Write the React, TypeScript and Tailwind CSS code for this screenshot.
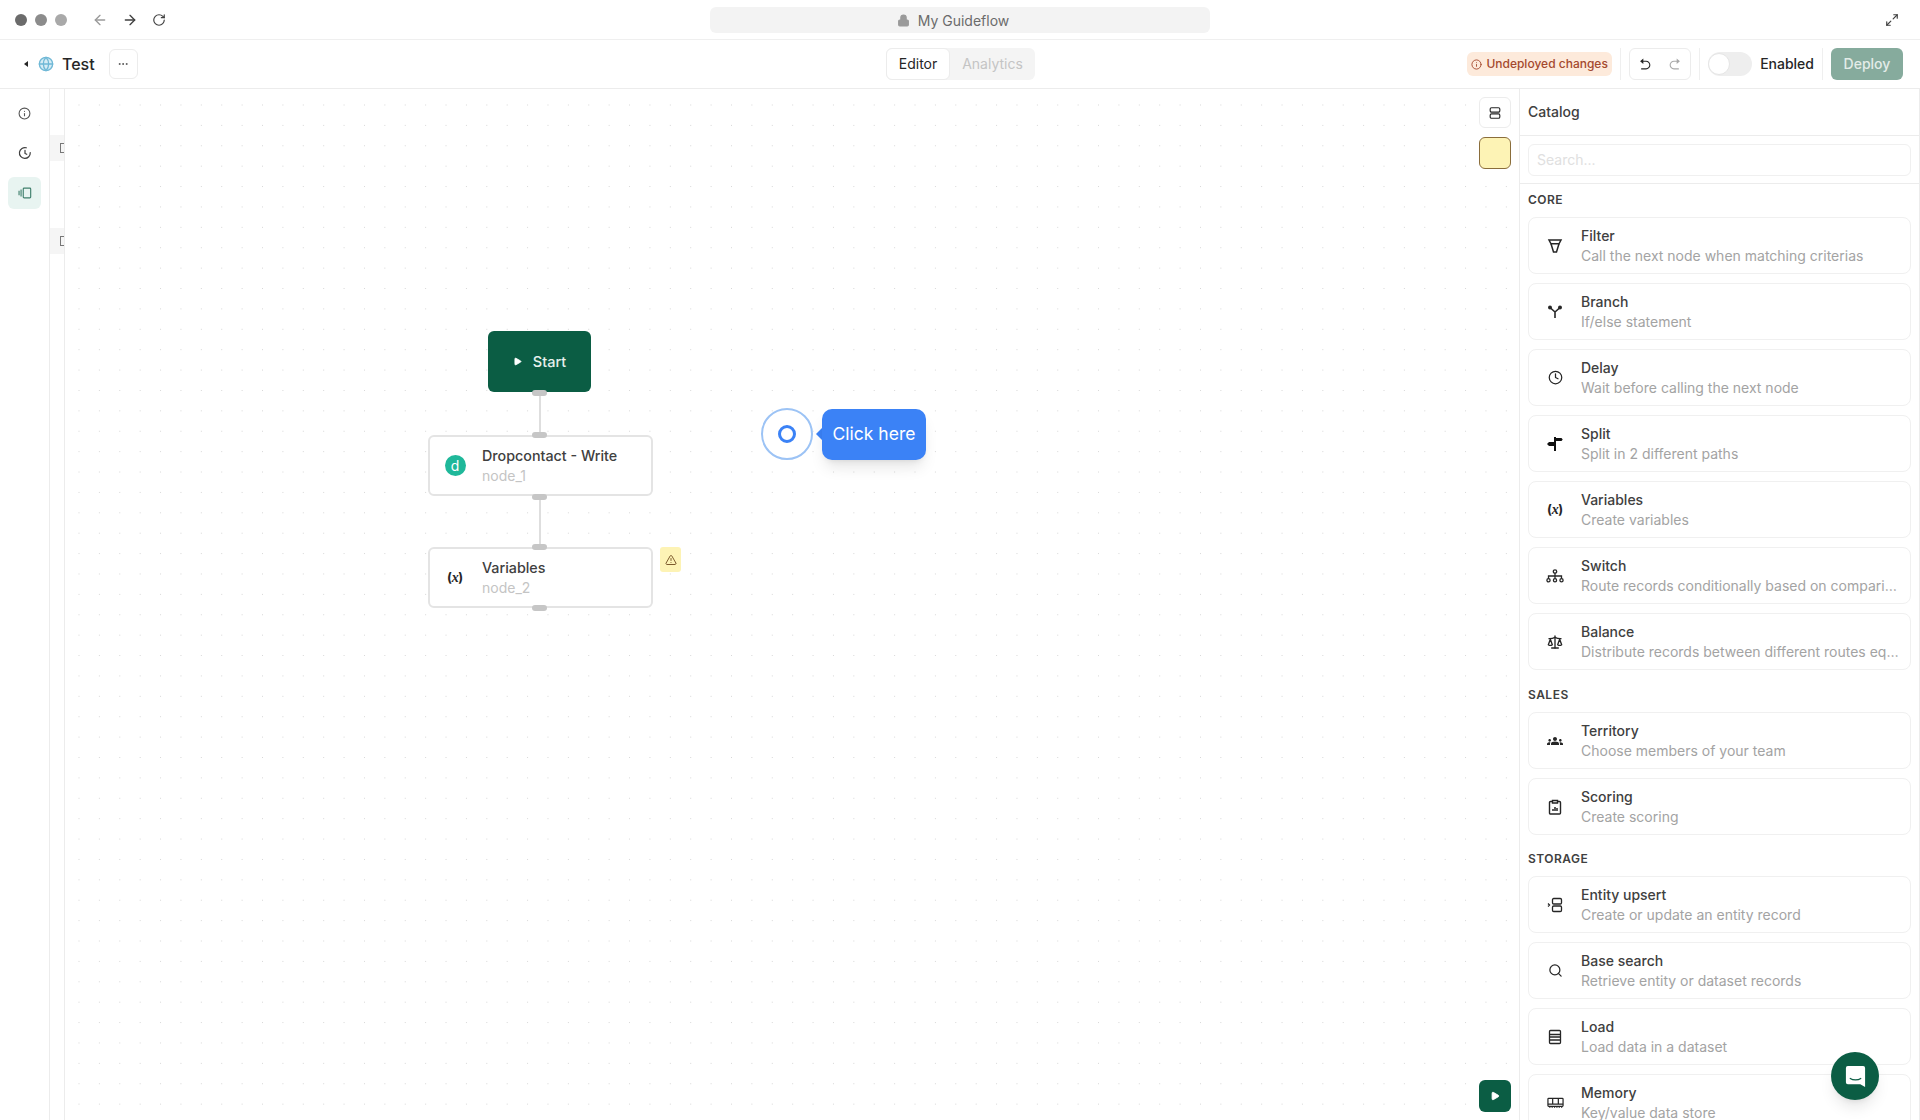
import { ReactNode } from "react";
import { ArrowLeft, ArrowRight, RotateCw, Globe, Maximize2, Info, Clock, Scale, Search, Play, TriangleAlert, Ellipsis, Lock } from "lucide-react";
import { RiArrowGoBackFill, RiArrowGoForwardFill } from "react-icons/ri";
import { MdGroups } from "react-icons/md";

const VariableIcon = () => (
  <span className="text-[13px] font-bold text-[#262626] tracking-tight">
    (<span className="italic font-['Liberation_Serif',serif] text-[14px]">x</span>)
  </span>
);

const svg = "w-4 h-4";

const FilterIcon = () => (
  <svg viewBox="0 0 16 16" className={svg} fill="none" stroke="#262626" strokeWidth="1.5">
    <path d="M2 2h12l-2 3.800H4z" />
    <path d="M4 5.800 6.500 14h3L12 5.800" />
  </svg>
);
const BranchIcon = () => (
  <svg viewBox="0 0 16 16" className={svg} fill="none" stroke="#262626" strokeWidth="1.600">
    <path d="M3.500 4 8 8l4.500-4M8 8v6" />
    <circle cx="3" cy="3.500" r="2" fill="#262626" stroke="none" />
    <circle cx="13" cy="3.500" r="2" fill="#262626" stroke="none" />
  </svg>
);
const SplitIcon = () => (
  <svg viewBox="0 0 16 16" className={svg} fill="#111">
    <path d="M7 1h2v14H7z" />
    <path d="M8.500 2h6l1.200 1.500-1.200 1.500h-6z" />
    <path d="M8 6H2L0 8l2 2h6z" />
  </svg>
);
const SwitchIcon = () => (
  <svg viewBox="0 0 18 16" className="w-[18px] h-4" fill="none" stroke="#262626" strokeWidth="1.3">
    <circle cx="9" cy="3.500" r="1.700" />
    <path d="M9 5.200V8M2.500 10.500V8h13v2.500M9 8v2.500" />
    <circle cx="2.500" cy="12.300" r="1.600" />
    <circle cx="9" cy="12.300" r="1.600" />
    <circle cx="15.500" cy="12.300" r="1.600" />
  </svg>
);
const ScoringIcon = () => (
  <svg viewBox="0 0 16 16" className={svg} fill="none" stroke="#262626" strokeWidth="1.4">
    <rect x="2.500" y="2.500" width="11" height="12.500" rx="1" />
    <path d="M5.500 1.500h5v2.500h-5z" fill="#fff" />
    <path d="M6 12V10M8 12V8M10 12V9" strokeWidth="1.500" />
  </svg>
);
const EntityIcon = () => (
  <svg viewBox="0 0 16 16" className={svg} fill="none" stroke="#262626" strokeWidth="1.300">
    <rect x="5.500" y="1.500" width="9" height="5.500" rx="1.200" />
    <rect x="5.500" y="9" width="9" height="5.500" rx="1.200" />
    <path d="m1 6.500 1.500 1.500L1 9.500" />
  </svg>
);
const LoadIcon = () => (
  <svg viewBox="0 0 16 16" className={svg} fill="none" stroke="#262626" strokeWidth="1.300">
    <rect x="2.500" y="1.500" width="11" height="13" rx="1" />
    <path d="M2.500 5.500h11M2.500 8h11M2.500 11h11" />
  </svg>
);
const MemoryIcon = () => (
  <svg viewBox="0 0 18 16" className="w-[17px] h-4" fill="none" stroke="#262626" strokeWidth="1.300">
    <rect x="1" y="3" width="16" height="8.500" rx="0.800" />
    <path d="M6 3v6M12 3v6M1 9.200h16" />
    <path d="M3 11.500v1.500M5.500 11.500v1.500M8 11.500v1.500M10.500 11.500v1.500M13 11.500v1.500M15.500 11.500v1.500" />
  </svg>
);
const PanelIcon = () => (
  <svg viewBox="0 0 16 16" className="w-[14px] h-[14px]" fill="none" stroke="#3f7f6c" strokeWidth="1.300">
    <rect x="6" y="2.500" width="8.500" height="11" rx="1" />
    <path d="M3.500 4v8M1.200 5.500v5" />
  </svg>
);
const StackIcon = () => (
  <svg viewBox="0 0 16 16" className="w-[14px] h-[14px]" fill="none" stroke="#262626" strokeWidth="1.300">
    <rect x="2.500" y="2" width="11" height="5" rx="1.500" />
    <rect x="2.500" y="9" width="11" height="5" rx="1.500" />
  </svg>
);
// clock with a small break in the ring, top right
const RecentIcon = () => (
  <svg viewBox="0 0 16 16" className="w-[14px] h-[14px]" fill="none" stroke="#404040" strokeWidth="1.400" strokeLinecap="round">
    <path d="M9.500 2A6.200 6.200 0 1 0 14 7.500" />
    <path d="M8 5v3.500l2 1" />
  </svg>
);

type Item = { title: string; desc: string; icon: ReactNode };

const sections: { name: string; className: string; items: Item[] }[] = [
  {
    name: "CORE",
    className: "",
    items: [
      { title: "Filter", desc: "Call the next node when matching criterias", icon: <FilterIcon /> },
      { title: "Branch", desc: "If/else statement", icon: <BranchIcon /> },
      { title: "Delay", desc: "Wait before calling the next node", icon: <Clock size={15} strokeWidth={2} color="#262626" /> },
      { title: "Split", desc: "Split in 2 different paths", icon: <SplitIcon /> },
      { title: "Variables", desc: "Create variables", icon: <VariableIcon /> },
      { title: "Switch", desc: "Route records conditionally based on comparisons", icon: <SwitchIcon /> },
      { title: "Balance", desc: "Distribute records between different routes equally", icon: <Scale size={16} strokeWidth={2} color="#262626" /> },
    ],
  },
  {
    name: "SALES",
    className: "mt-px",
    items: [
      { title: "Territory", desc: "Choose members of your team", icon: <MdGroups size={16} color="#262626" /> },
      { title: "Scoring", desc: "Create scoring", icon: <ScoringIcon /> },
    ],
  },
  {
    name: "STORAGE",
    className: "",
    items: [
      { title: "Entity upsert", desc: "Create or update an entity record", icon: <EntityIcon /> },
      { title: "Base search", desc: "Retrieve entity or dataset records", icon: <Search size={15} strokeWidth={2} color="#262626" /> },
      { title: "Load", desc: "Load data in a dataset", icon: <LoadIcon /> },
      { title: "Memory", desc: "Key/value data store", icon: <MemoryIcon /> },
    ],
  },
];

function CatalogCard({ item }: { item: Item }) {
  return (
    <div className="flex h-[57px] shrink-0 items-center rounded-lg border border-[#f0f0f0] bg-white">
      <div className="flex w-[52px] shrink-0 justify-center">{item.icon}</div>
      <div className="min-w-0 flex-1 pr-2">
        <div className="text-[14px] leading-5 font-medium text-[#404040]">{item.title}</div>
        <div className="truncate text-[14px] leading-5 text-[#a3a3a3]">{item.desc}</div>
      </div>
    </div>
  );
}

function Handle({ className }: { className: string }) {
  return <div className={"absolute h-[6px] w-[15px] rounded-full bg-[#c6c6c6] " + className} />;
}

function FlowNode({ top, title, sub, icon }: { top: string; title: string; sub: string; icon: ReactNode }) {
  return (
    <div className={"absolute left-[363px] flex h-[61px] w-[225px] items-center rounded-md border-2 border-[#e4e4e4] bg-white " + top}>
      <div className="flex w-[50px] shrink-0 justify-center">{icon}</div>
      <div className="pl-[2px]">
        <div className="text-[14.3px] leading-5 font-medium text-[#404040]">{title}</div>
        <div className="text-[14px] leading-5 text-[#c4c4c4]">{sub}</div>
      </div>
    </div>
  );
}

export default function App() {
  return (
    <div className="relative flex h-[1120px] w-[1920px] flex-col overflow-hidden bg-white font-['Inter',sans-serif] text-[#262626]">
      {/* Browser bar */}
      <div className="relative flex h-[40px] shrink-0 items-center border-b border-[#efefef] pl-[15px]">
        <div className="flex items-center gap-[8px]">
          <span className="h-3 w-3 rounded-full bg-[#6b6b6b]" />
          <span className="h-3 w-3 rounded-full bg-[#8c8c8c]" />
          <span className="h-3 w-3 rounded-full bg-[#a9a9a9]" />
        </div>
        <div className="ml-[25px] flex items-center gap-[14px]">
          <ArrowLeft size={16} color="#9a9a9a" />
          <ArrowRight size={16} color="#404040" />
          <RotateCw size={14} color="#404040" />
        </div>
        <div className="absolute top-[7px] left-[710px] flex h-[26px] w-[500px] items-center justify-center gap-[8px] rounded-md bg-[#f3f3f3] pr-[14px]">
          <Lock size={13} fill="#9a9a9a" color="#9a9a9a" />
          <span className="text-[14px] text-[#6b6b6b]">My Guideflow</span>
        </div>
        <Maximize2 size={14} color="#404040" className="absolute top-[13px] right-[21px]" />
      </div>

      {/* App header */}
      <div className="relative flex h-[49px] shrink-0 items-center border-b border-[#ececec] pl-[24px]">
        <div className="h-0 w-0 border-y-[3px] border-r-[4px] border-y-transparent border-r-[#262626]" />
        <Globe size={16} color="#6fb8d6" fill="#d6ecf5" className="ml-[10px]" />
        <span className="ml-[8px] text-[16px] font-medium">Test</span>
        <div className="ml-[14px] flex h-[30px] w-[29px] items-center justify-center rounded-md border border-[#ececec]">
          <Ellipsis size={12} color="#555" />
        </div>

        <div className="absolute top-[8px] left-[886px] flex h-[32px] w-[149px] rounded-md bg-[#f4f4f4]">
          <div className="flex w-[64px] items-center justify-center rounded-md border border-[#ececec] bg-white pb-px text-[14px]">Editor</div>
          <div className="flex flex-1 items-center justify-center pb-px text-[14px] text-[#c4c4c4]">Analytics</div>
        </div>

        <div className="absolute top-[8px] right-[17px] flex h-[32px] items-center">
          <div className="flex h-[24px] w-[145px] items-center justify-center gap-[4px] rounded-md bg-[#fdeadb]">
            <Info size={11} color="#a4492e" />
            <span className="text-[12px] font-medium text-[#a4492e]">Undeployed changes</span>
          </div>
          <div className="mx-[8px] h-[32px] w-px bg-[#efefef]" />
          <div className="flex h-[32px] w-[62px] items-center justify-between rounded-md border border-[#ececec] px-[9px]">
            <RiArrowGoBackFill size={13} color="#262626" />
            <RiArrowGoForwardFill size={13} color="#a9a9a9" />
          </div>
          <div className="mx-[8px] h-[32px] w-px bg-[#efefef]" />
          <div className="flex h-[24px] w-[44px] items-center rounded-full bg-[#eeeeee]">
            <span className="h-[22px] w-[22px] rounded-full border border-[#e5e5e5] bg-white" />
          </div>
          <span className="ml-[8px] pb-px text-[14px] font-medium">Enabled</span>
          <div className="mx-[8px] h-[32px] w-px bg-[#efefef]" />
          <div className="flex h-[32px] w-[72px] items-center justify-center rounded-md bg-[#86ab9d] pb-px text-[14px] font-medium text-[#e3ece8]">Deploy</div>
        </div>
      </div>

      {/* Body */}
      <div className="flex min-h-0 flex-1">
        <div className="flex w-[50px] shrink-0 flex-col items-center gap-[8px] border-r border-[#ececec] pt-[8px]">
          <div className="flex h-[32px] w-[33px] items-center justify-center"><Info size={13} color="#555" /></div>
          <div className="flex h-[32px] w-[33px] items-center justify-center"><RecentIcon /></div>
          <div className="flex h-[32px] w-[33px] items-center justify-center rounded-md bg-[#e8f4f1]"><PanelIcon /></div>
        </div>
        <div className="flex w-[15px] shrink-0 flex-col border-r border-[#ececec] pt-[46px]">
          <div className="flex h-[26px] items-center justify-end bg-[#f5f5f5]">
            <span className="h-[10px] w-[4px] border border-r-0 border-[#777]" />
          </div>
          <div className="mt-[67px] flex h-[26px] items-center justify-end bg-[#f5f5f5]">
            <span className="h-[10px] w-[4px] border border-r-0 border-[#777]" />
          </div>
        </div>

        {/* Canvas */}
        <div className="relative flex-1 bg-[radial-gradient(circle,#d6d6d6_0.6px,transparent_0.9px)] bg-size-[20.4px_20.4px] bg-position-[3.8px_5.8px]">
          <div className="absolute top-[303px] left-[474px] h-[43px] w-[2px] bg-[#dedede]" />
          <div className="absolute top-[407px] left-[474px] h-[51px] w-[2px] bg-[#dedede]" />

          <div className="absolute top-[242px] left-[423px] flex h-[61px] w-[103px] items-center justify-center gap-[11px] rounded-md bg-[#0b5d44] text-[14.5px] font-medium text-[#e6f0ec]">
            <Play size={9} fill="#fff" color="#fff" />
            Start
          </div>
          <Handle className="top-[301px] left-[467px]" />

          <FlowNode
            top="top-[346px]"
            title="Dropcontact - Write"
            sub="node_1"
            icon={
              <span className="flex h-[21px] w-[21px] items-center justify-center rounded-full bg-[#1fb89a] text-[14px] leading-none text-white">d</span>
            }
          />
          <Handle className="top-[343px] left-[467px]" />
          <Handle className="top-[405px] left-[467px]" />

          <FlowNode top="top-[458px]" title="Variables" sub="node_2" icon={<VariableIcon />} />
          <Handle className="top-[455px] left-[467px]" />
          <Handle className="top-[516px] left-[467px]" />

          <div className="absolute top-[458px] left-[595px] flex h-[25px] w-[21px] items-center justify-center rounded-[3px] bg-[#fdf3b5]">
            <TriangleAlert size={12} color="#7c5a2c" />
          </div>

          <div className="absolute top-[319px] left-[696px] flex items-center">
            <div className="flex h-[52px] w-[52px] items-center justify-center rounded-full border-2 border-[#9cc3f5] bg-white">
              <span className="h-[18px] w-[18px] rounded-full border-[3px] border-[#3b82f6]" />
            </div>
            <div className="ml-[3px] h-0 w-0 border-y-[6px] border-r-[6px] border-y-transparent border-r-[#3b82f6]" />
            <div className="flex h-[51px] w-[104px] items-center justify-center rounded-[10px] bg-[#3b82f6] pt-px text-[17.5px] text-white shadow-lg">
              Click here
            </div>
          </div>

          <div className="absolute top-[8px] right-[8px] flex flex-col gap-[9px]">
            <div className="flex h-[31px] w-[32px] items-center justify-center rounded-md border border-[#ececec] bg-white"><StackIcon /></div>
            <div className="h-[32px] w-[32px] rounded-md border border-[#8a6d3b] bg-[#fdf3b5]" />
          </div>

          <div className="absolute right-[8px] bottom-[8px] flex h-[32px] w-[32px] items-center justify-center rounded-md bg-[#0b5d44]">
            <Play size={10} fill="#fff" color="#fff" />
          </div>
        </div>

        {/* Catalog */}
        <div className="flex w-[401px] shrink-0 flex-col overflow-hidden border-r border-l border-[#ececec]">
          <div className="flex h-[47px] shrink-0 items-center border-b border-[#ececec] pb-[2px] pl-[8px] text-[14px] font-medium text-[#404040]">Catalog</div>
          <div className="h-[48px] shrink-0 border-b border-[#ececec] px-[8px] py-[8px]">
            <div className="flex h-[32px] items-center rounded-md border border-[#f0f0f0] px-[8px] pb-[2px] text-[14px] text-[#e0e0e0]">Search...</div>
          </div>
          <div className="flex flex-col gap-[16px] px-[8px] pt-[8px]">
            {sections.map((s) => (
              <div key={s.name} className={"flex flex-col gap-[9px] " + s.className}>
                <div className="text-[12px] leading-4 font-semibold tracking-[0.04em] text-[#404040]">{s.name}</div>
                <div className="flex flex-col gap-[9px]">
                  {s.items.map((item) => (
                    <CatalogCard key={item.title} item={item} />
                  ))}
                </div>
              </div>
            ))}
          </div>
        </div>
      </div>

      {/* Chat launcher */}
      <div className="absolute right-[41px] bottom-[20px] flex h-[48px] w-[48px] items-center justify-center rounded-full bg-[#0b5d44] shadow-lg">
        <svg viewBox="0 0 24 24" className="h-[23px] w-[23px]">
          <path d="M4 1h16a2 2 0 0 1 2 2v20l-5-3H4a2 2 0 0 1-2-2V3a2 2 0 0 1 2-2z" fill="#fff" />
          <path d="M6.500 14c3 2 8 2 11 0" fill="none" stroke="#0b5d44" strokeWidth="1.200" strokeLinecap="round" />
        </svg>
      </div>
    </div>
  );
}
